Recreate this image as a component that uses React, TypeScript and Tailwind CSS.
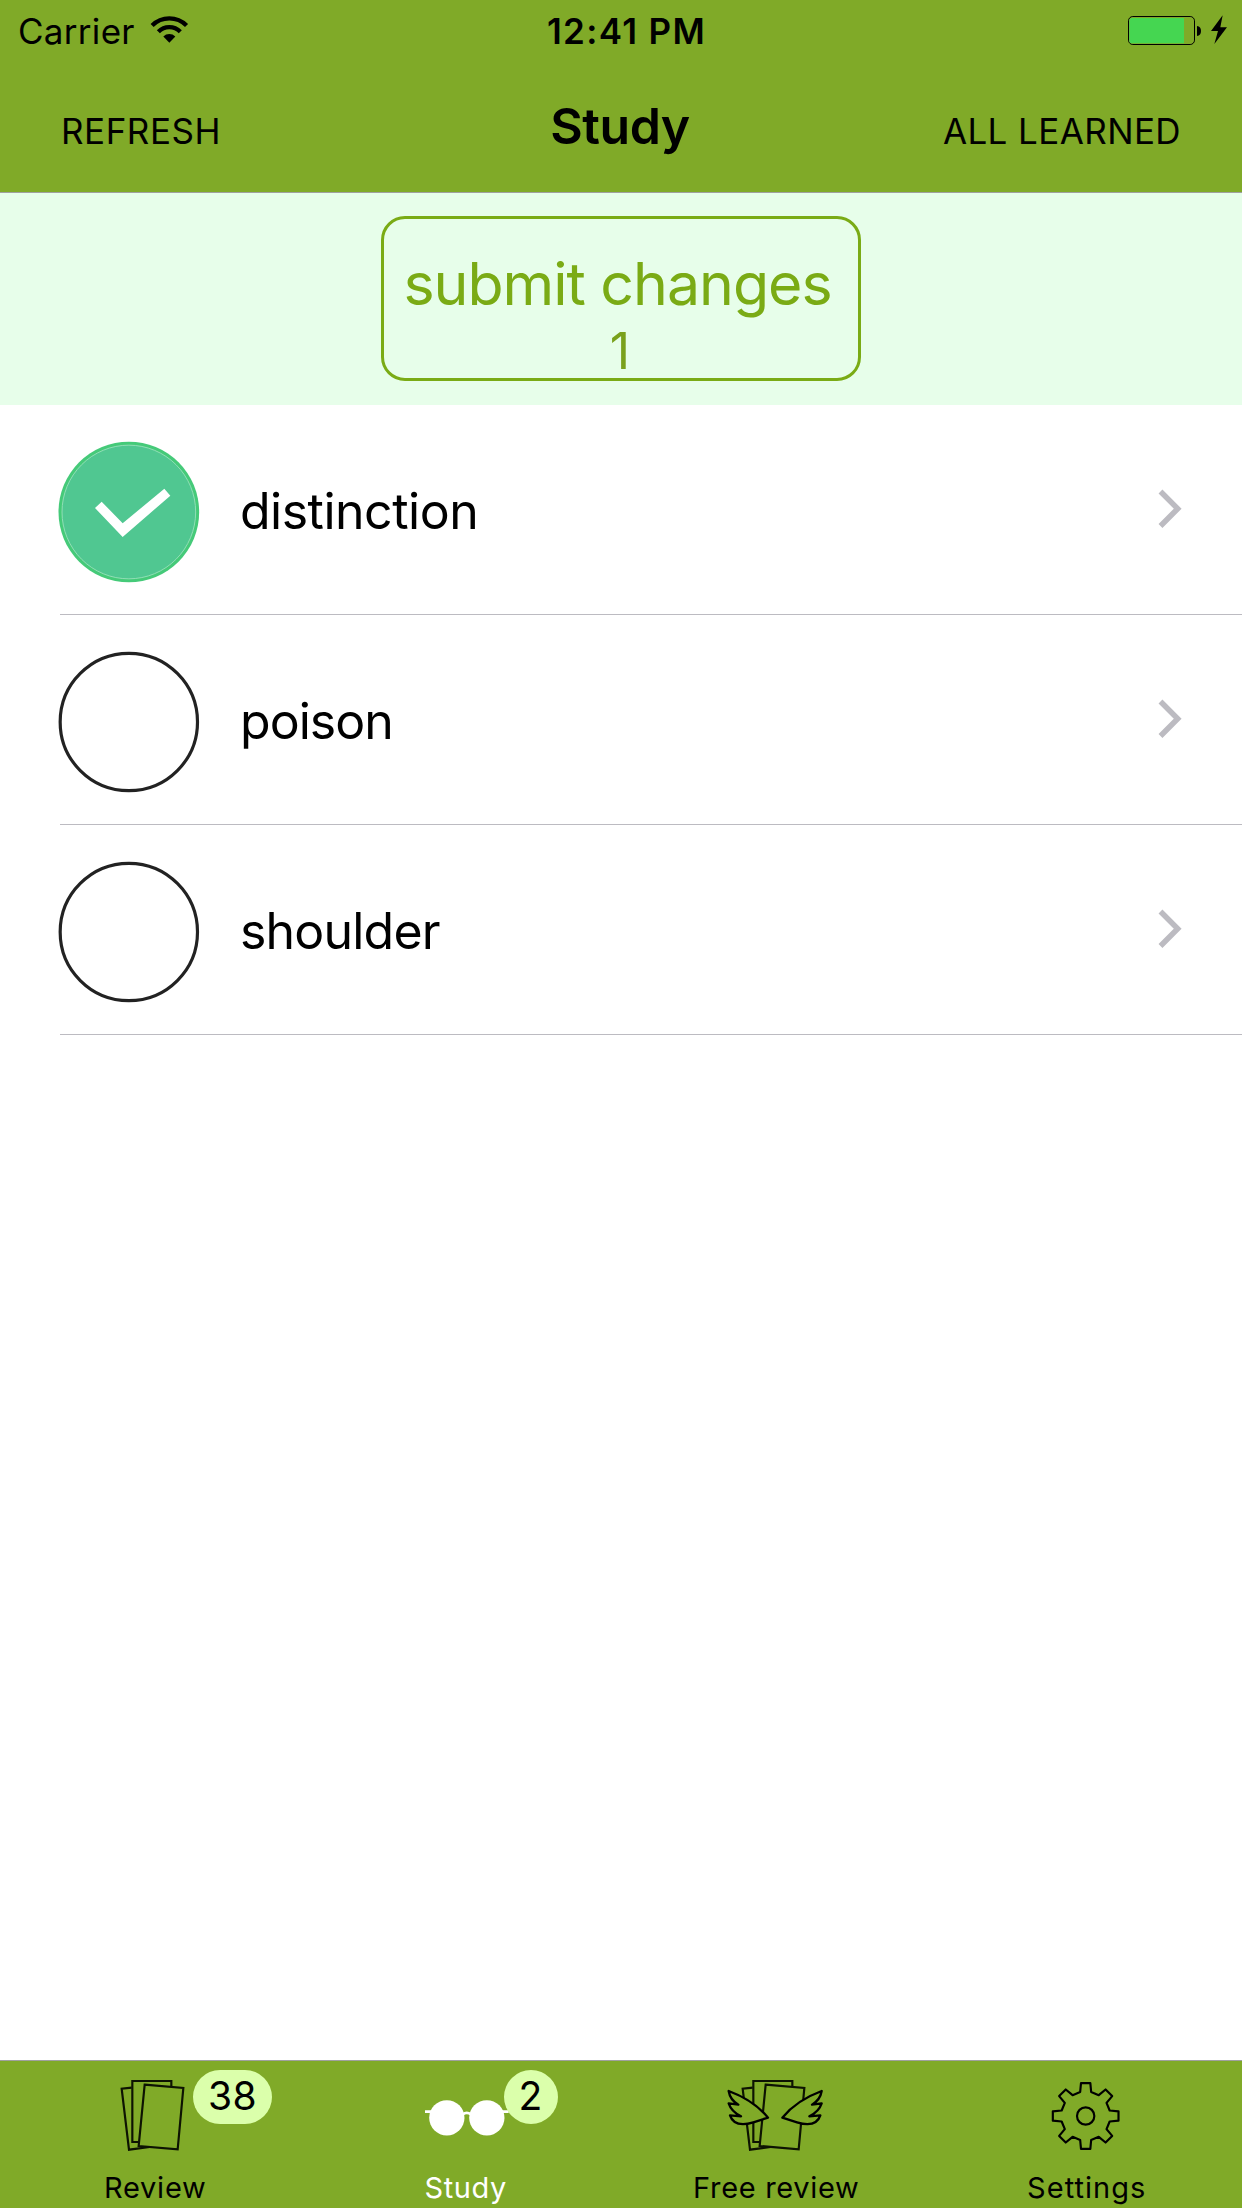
import type { ReactNode } from "react";

const words = [
  { text: "distinction", done: true, tracking: "tracking-[-0.5px]" },
  { text: "poison", done: false, tracking: "tracking-[-0.95px]" },
  { text: "shoulder", done: false, tracking: "tracking-[-0.8px]" },
];

function WifiIcon() {
  return (
    <svg viewBox="447 42 120 90" className="mt-[14px] ml-[15px] h-[30px] w-10" fill="none" stroke="#000" strokeWidth="13">
      <path d="M453.4 76.4A73 73 0 0 1 556.6 76.4" />
      <path d="M472.1 95.1A46.5 46.5 0 0 1 537.9 95.1" />
      <path d="M505 128.5L487 109.5A26 26 0 0 1 523 109.5Z" fill="#000" stroke="none" />
    </svg>
  );
}

function BatteryIcon() {
  return (
    <svg viewBox="681 39 303 99" className="mt-[13px] h-[33px] w-[101px]">
      <rect x="685.5" y="49.5" width="198" height="84" rx="13" fill="none" stroke="#000" strokeWidth="3" />
      <path d="M696 54H852V130H696Q688 130 688 122V62Q688 54 696 54Z" fill="#45d651" />
      <path d="M891 78Q903 80 903 93T891 108Z" />
      <path d="M968 46L933 93H954L943 132L981 82H961Z" />
    </svg>
  );
}

function CheckCircle({ done }: { done: boolean }) {
  return (
    <svg viewBox="54 63 426 426" className="mt-9 size-[142px] shrink-0">
      {done ? (
        <>
          <circle cx="266.5" cy="276" r="211" fill="#45ca79" />
          <circle cx="266.5" cy="276" r="200.5" fill="#50c791" stroke="#9fe2bf" strokeWidth="2.5" />
          <path d="M165 264L185 245L248 310L373 206L391 227L248 351Z" fill="#fff" />
        </>
      ) : (
        <circle cx="266.5" cy="276" r="206" fill="none" stroke="#222" strokeWidth="9.5" />
      )}
    </svg>
  );
}

function Chevron() {
  return (
    <svg viewBox="0 0 30 42" className="mt-[83px] mr-[56px] ml-auto h-[42px] w-[30px]">
      <path d="M4.5 3.5L21.7 20.7L4.5 38" fill="none" stroke="#bcbbc1" strokeWidth="5.5" />
    </svg>
  );
}

function TabSvg({ viewBox, children }: { viewBox: string; children: ReactNode }) {
  return (
    <svg viewBox={viewBox} className="mt-3 h-20 w-[100px]" fill="none" stroke="#0d1302" strokeWidth="6.5">
      {children}
    </svg>
  );
}

function Cards() {
  return (
    <>
      <path d="M126 113L96 116L118 299L180 291" />
      <path d="M146 276H128V93H245V109" />
      <path d="M165 104L281 114L264 298L147 288Z" />
    </>
  );
}

const WING =
  "M54 123C57 142 66 154 83 164L54 160C60 178 71 189 91 199L58 196C68 226 98 226 128 217L172 203C146 171 108 143 54 123Z";

function ReviewIcon() {
  return (
    <TabSvg viewBox="46 69 300 240">
      <Cards />
    </TabSvg>
  );
}

function FreeReviewIcon() {
  return (
    <TabSvg viewBox="46 69 300 240">
      <Cards />
      <g fill="#80aa28" stroke="#000" strokeWidth="7" strokeLinejoin="round">
        <path d={WING} />
        <path d={WING} transform="translate(387 0) scale(-1 1)" />
      </g>
    </TabSvg>
  );
}

function GlassesIcon() {
  return (
    <TabSvg viewBox="47 69 300 240">
      <g fill="#fff" stroke="none">
        <circle cx="139.5" cy="203.5" r="53" />
        <circle cx="259.5" cy="203.5" r="53" />
      </g>
      <path d="M74 185H98M301 185H325M187 193Q199 184 212 193" stroke="#fff" strokeWidth="8" />
    </TabSvg>
  );
}

const gearPoints = Array.from({ length: 8 }, (_, i) => {
  const a = (i * Math.PI) / 4;
  return [
    [-16.5, -72],
    [-14, -98.5],
    [14, -98.5],
    [16.5, -72],
  ]
    .map(([x, y]) => `${256 + x * Math.cos(a) - y * Math.sin(a)},${198 + x * Math.sin(a) + y * Math.cos(a)}`)
    .join(" ");
}).join(" ");

function GearIcon() {
  return (
    <TabSvg viewBox="110 69 300 240">
      <g stroke="#000" strokeWidth="6.5" strokeLinejoin="round">
        <polygon points={gearPoints} />
        <circle cx="256" cy="198" r="26" />
      </g>
    </TabSvg>
  );
}

const tabs = [
  { label: "Review", icon: <ReviewIcon />, badge: "38", style: "text-black tracking-[0.74px]" },
  { label: "Study", icon: <GlassesIcon />, badge: "2", style: "text-white tracking-[0.6px]" },
  { label: "Free review", icon: <FreeReviewIcon />, style: "text-black tracking-[0.68px]" },
  { label: "Settings", icon: <GearIcon />, style: "text-black tracking-[1.04px]" },
];

export default function App() {
  return (
    <div className="flex h-[2208px] w-[1242px] flex-col overflow-hidden bg-white font-['Inter',sans-serif] text-black">
      <header className="h-[193px] border-b border-[#a0a0a0] bg-[#80aa28]">
        <div className="flex h-[62px] text-[35px] leading-[62px]">
          <div className="flex flex-1 pl-[18px]">
            <span className="tracking-[0.3px]">Carrier</span>
            <WifiIcon />
          </div>
          <span className="ml-[7px] font-semibold tracking-[1.35px]">12:41 PM</span>
          <div className="flex flex-1 justify-end pr-[14px]">
            <BatteryIcon />
          </div>
        </div>
        <nav className="flex items-baseline px-[61px] pt-[34px] text-[35px] leading-[60px]">
          <button className="flex-1 text-left tracking-[0.55px]">REFRESH</button>
          <h1 className="mr-0.5 text-[50px] font-semibold tracking-[-0.5px]">Study</h1>
          <button className="flex-1 text-right tracking-[0.4px]">ALL LEARNED</button>
        </nav>
      </header>

      <section className="flex h-[212px] justify-center bg-[#e7feea] pt-[23px]">
        <button className="flex h-[165px] w-[480px] flex-col items-center rounded-[24px] border-3 border-[#7aab15] pt-[30px] text-[#7aab15]">
          <span className="mr-[7px] text-[59px] leading-[70px] tracking-[-1.01px] whitespace-nowrap">submit changes</span>
          <span className="mr-0.5 text-[50px] leading-[64px] text-[#7aa11c]">1</span>
        </button>
      </section>

      <ul className="flex-1">
        {words.map((w) => (
          <li key={w.text} className="flex h-[210px] pl-[58px]">
            <CheckCircle done={w.done} />
            <div className="-ml-[140px] flex flex-1 border-b border-[#bcbbc1] pl-[180px]">
              <span className={`h-[209px] text-[50px] leading-[213px] ${w.tracking}`}>{w.text}</span>
              <Chevron />
            </div>
          </li>
        ))}
      </ul>

      <footer className="grid h-[148px] grid-cols-4 border-t border-[#a0a0a0] bg-[#80aa28]">
        {tabs.map((t) => (
          <div key={t.label} className="relative flex flex-col items-center">
            {t.icon}
            {t.badge && (
              <span className="absolute top-[9px] left-[193px] flex h-[54px] min-w-[54px] justify-center rounded-full bg-[#dbffab] px-[15px] text-[39px] leading-[52px] tracking-[0.3px]">
                {t.badge}
              </span>
            )}
            <span className={`mt-[17px] text-[29px] leading-9 ${t.style}`}>{t.label}</span>
          </div>
        ))}
      </footer>
    </div>
  );
}
